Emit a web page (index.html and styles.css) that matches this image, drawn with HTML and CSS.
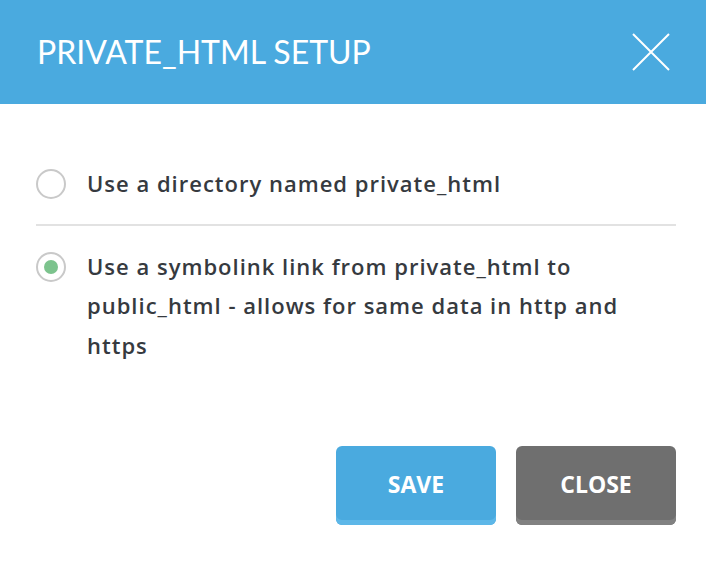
FILE: index.html
```html
<!DOCTYPE html>
<html>
<head>
    <title>private_html setup</title>
    <link rel="stylesheet" href="styles.css">
</head>
<body>
    <div class="dialog">
        <div class="dialog-header">
            <h1>PRIVATE_HTML SETUP</h1>
            <button class="close-x" aria-label="Close">
                <svg width="38" height="38" viewBox="0 0 38 38">
                    <path d="M1 1 L37 37 M37 1 L1 37" stroke="#fff" stroke-width="2" fill="none"/>
                </svg>
            </button>
        </div>

        <div class="dialog-body">
            <label class="option">
                <span class="radio"></span>
                <span class="option-text">Use a directory named private_html</span>
            </label>
            <div class="divider"></div>
            <label class="option">
                <span class="radio checked"></span>
                <span class="option-text">Use a symbolink link from private_html to public_html - allows for same data in http and https</span>
            </label>
        </div>

        <div class="dialog-actions">
            <button class="btn btn-save">SAVE</button>
            <button class="btn btn-close">CLOSE</button>
        </div>
    </div>
</body>
</html>
```

FILE: styles.css
```css
body {
    margin: 0;
    background: white;
    font-family: "Open Sans", Arial, sans-serif;
}
.dialog {
    width: 706px;
}
.dialog-header {
    background: #4aaadf;
    height: 104px;
    display: flex;
    align-items: center;
    justify-content: space-between;
    padding: 0 36px 0 37px;
    box-sizing: border-box;
}
.dialog-header h1 {
    margin: 0 0 2px;
    color: white;
    font-family: Lato, "Open Sans", sans-serif;
    font-weight: 400;
    font-size: 32px;
}
.close-x {
    background: none;
    border: none;
    padding: 0;
    width: 38px;
    height: 38px;
    cursor: pointer;
}
.dialog-body {
    padding: 60px 30px 0 36px;
}
.option {
    display: flex;
    align-items: flex-start;
    gap: 21px;
    cursor: pointer;
}
.option-text {
    font-size: 22px;
    font-weight: 600;
    letter-spacing: 1px;
    line-height: 39.5px;
    color: #363a3f;
}
.radio {
    flex: none;
    width: 30px;
    height: 30px;
    margin-top: 5px;
    border: 2px solid #c9c9c9;
    border-radius: 50%;
    box-sizing: border-box;
    display: flex;
    align-items: center;
    justify-content: center;
}
.radio.checked::after {
    content: "";
    width: 14px;
    height: 14px;
    border-radius: 50%;
    background: #7cc38d;
}
.divider {
    height: 2px;
    background: #e2e2e2;
    margin: 20px 0 21px;
}
.dialog-actions {
    display: flex;
    justify-content: flex-end;
    gap: 20px;
    padding: 81px 30px 0 0;
}
.btn {
    width: 160px;
    height: 79px;
    border: none;
    border-radius: 6px;
    color: white;
    font-family: "Open Sans", Arial, sans-serif;
    font-weight: 700;
    font-size: 23px;
    padding: 0 0 4px;
    cursor: pointer;
}
.btn-save {
    background: #4aaadf;
    box-shadow: inset 0 -5px 0 #5db7e8;
}
.btn-close {
    background: #6f6f6f;
    box-shadow: inset 0 -5px 0 #818181;
}
```
